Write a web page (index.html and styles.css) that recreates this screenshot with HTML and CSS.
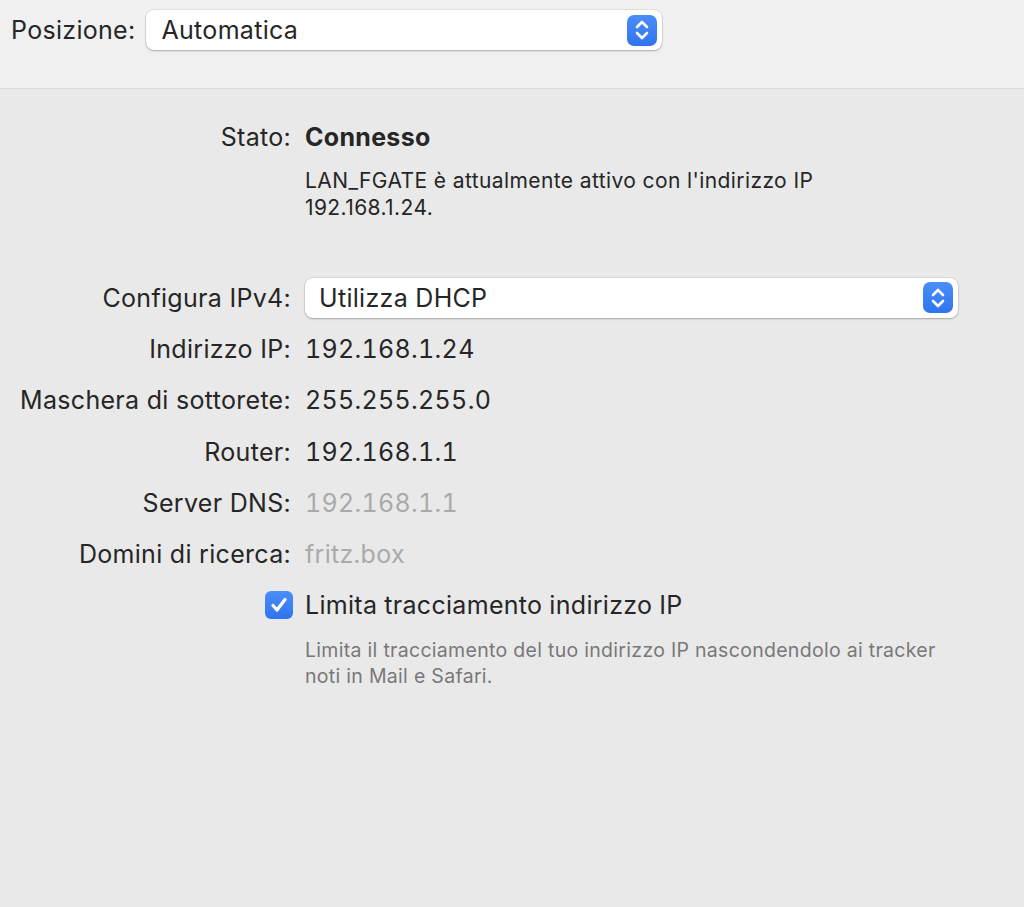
FILE: index.html
```html
<!DOCTYPE html>
<html lang="it">
<head>
    <meta charset="UTF-8">
    <meta content="width=device-width, initial-scale=1.0" name="viewport">
    <link rel="stylesheet" href="styles.css">
    <title>Rete</title>
</head>
<body>

<!-- Location bar -->
<div class="location-bar">
    <span class="location-label">Posizione:</span>
    <div class="popup popup-location">
        <span>Automatica</span>
        <span class="stepper">
            <svg width="16" height="22" viewBox="0 0 16 22">
                <polyline points="3,8 8,3 13,8"/>
                <polyline points="3,14 8,19 13,14"/>
            </svg>
        </span>
    </div>
</div>

<!-- Details -->
<div class="panel">
    <div class="row row-status">
        <span class="label">Stato:</span>
        <span class="value status">Connesso</span>
    </div>
    <p class="note note-status">LAN_FGATE è attualmente attivo con l'indirizzo IP 192.168.1.24.</p>

    <div class="row row-config">
        <span class="label">Configura IPv4:</span>
        <div class="popup popup-config">
            <span>Utilizza DHCP</span>
            <span class="stepper">
                <svg width="16" height="22" viewBox="0 0 16 22">
                    <polyline points="3,8 8,3 13,8"/>
                    <polyline points="3,14 8,19 13,14"/>
                </svg>
            </span>
        </div>
    </div>
    <div class="row">
        <span class="label">Indirizzo IP:</span>
        <span class="value">192.168.1.24</span>
    </div>
    <div class="row">
        <span class="label">Maschera di sottorete:</span>
        <span class="value">255.255.255.0</span>
    </div>
    <div class="row">
        <span class="label">Router:</span>
        <span class="value">192.168.1.1</span>
    </div>
    <div class="row">
        <span class="label">Server DNS:</span>
        <span class="value dim">192.168.1.1</span>
    </div>
    <div class="row">
        <span class="label">Domini di ricerca:</span>
        <span class="value dim">fritz.box</span>
    </div>
    <div class="row">
        <span class="label">
            <span class="checkbox">
                <svg width="20" height="18" viewBox="0 0 20 18">
                    <polyline points="4,9.5 8,14 16,3.5"/>
                </svg>
            </span>
        </span>
        <span class="value">Limita tracciamento indirizzo IP</span>
    </div>
    <p class="note note-tracking">Limita il tracciamento del tuo indirizzo IP nascondendolo ai tracker noti in Mail e Safari.</p>
</div>

</body>
</html>
```

FILE: styles.css
```css
body {
    margin: 0;
    height: 907px;
    overflow: hidden;
    background-color: #e9e9e9;
    font-family: Inter, "Noto Sans", sans-serif;
    color: #262626;
    font-size: 25px;
    letter-spacing: 0.3px;
}

.location-bar {
    display: flex;
    align-items: center;
    gap: 11px;
    height: 60px;
    padding: 0 0 28px 11px;
    background-color: #f0f0f0;
    border-bottom: 1px solid #dadada;
}

.location-label {
    margin-top: -1px;
}

.popup {
    display: flex;
    align-items: center;
    justify-content: space-between;
    box-sizing: border-box;
    height: 40px;
    padding: 0 5px 0 15px;
    background-color: white;
    border-radius: 8px;
    box-shadow: 0 0 0 0.5px rgba(0, 0, 0, 0.12), 0 1px 2px rgba(0, 0, 0, 0.25);
}

.popup-location {
    width: 516px;
}

.popup-config {
    width: 653px;
    padding-left: 14px;
}

.stepper {
    display: flex;
    align-items: center;
    justify-content: center;
    width: 30px;
    height: 31px;
    border-radius: 7px;
    background: linear-gradient(#4a8ef8, #2f74ee);
}

.stepper polyline,
.checkbox polyline {
    fill: none;
    stroke: white;
    stroke-width: 2.6;
    stroke-linecap: round;
    stroke-linejoin: round;
}

.checkbox polyline {
    stroke-width: 3.2;
}

.panel {
    padding-top: 28px;
}

.row {
    display: grid;
    grid-template-columns: 291px 1fr;
    column-gap: 14px;
    align-items: center;
    height: 51.3px;
}

.row-status {
    height: 40px;
}

.row-config {
    margin-top: 51px;
}

.label {
    text-align: right;
    display: flex;
    justify-content: flex-end;
}

.value {
    font-variant-numeric: tabular-nums;
}

.status {
    font-weight: 700;
}

.dim {
    color: #aaaaaa;
}

.note {
    margin: 0 0 0 305px;
    line-height: 27px;
}

.note-status {
    margin-top: 10px;
    width: 580px;
    font-size: 21px;
    letter-spacing: 0.4px;
}

.note-tracking {
    margin-top: 6px;
    width: 660px;
    font-size: 19.5px;
    line-height: 26px;
    letter-spacing: 0.3px;
    color: #787878;
}

.checkbox {
    display: flex;
    align-items: center;
    justify-content: center;
    width: 28px;
    height: 28px;
    margin-right: -2px;
    border-radius: 6px;
    background: linear-gradient(#4a8ef8, #2f74ee);
}
```
